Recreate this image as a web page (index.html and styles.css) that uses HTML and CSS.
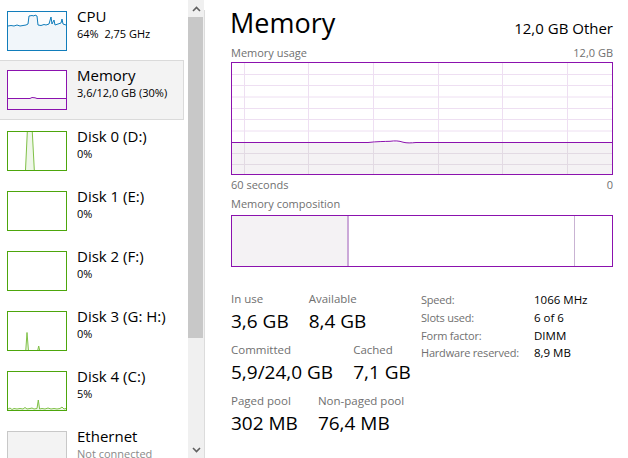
FILE: index.html
```html
<!DOCTYPE html>
<html>
<head>
<meta charset="utf-8">
<title>Task Manager - Memory</title>
<link rel="stylesheet" href="styles.css">
</head>
<body>
<div class="app">
  <nav class="sidebar">
    <div class="item">
      <div class="thumb thumb-cpu">
        <svg width="58" height="38" viewBox="0 0 58 38">
          <path class="cpu-fill" d="M0,14 L3,13.5 L6,14 L9,13 L12,14 L15,13.5 L18,13 L20,12 L21,4 L24,3.5 L26,4 L27,3 L29,4 L30,13 L33,13.5 L36,12.5 L38,13 L41,12 L43,5 L44,12 L46,8 L47,13 L50,12 L53,11 L54,7 L55,12 L58,13 L58,38 L0,38 Z"/>
          <path class="cpu-line" d="M0,14 L3,13.5 L6,14 L9,13 L12,14 L15,13.5 L18,13 L20,12 L21,4 L24,3.5 L26,4 L27,3 L29,4 L30,13 L33,13.5 L36,12.5 L38,13 L41,12 L43,5 L44,12 L46,8 L47,13 L50,12 L53,11 L54,7 L55,12 L58,13"/>
        </svg>
      </div>
      <div class="info"><div class="name">CPU</div><div class="sub">64%&nbsp; 2,75 GHz</div></div>
    </div>
    <div class="item selected">
      <div class="thumb thumb-mem">
        <svg width="58" height="38" viewBox="0 0 58 38">
          <path class="mem-fill" d="M0,27.5 L22,27.5 L24,26.5 L27,26.8 L29,27.5 L58,27.5 L58,38 L0,38 Z"/>
          <path class="mem-line" d="M0,27.5 L22,27.5 L24,26.5 L27,26.8 L29,27.5 L58,27.5"/>
        </svg>
      </div>
      <div class="info"><div class="name">Memory</div><div class="sub">3,6/12,0 GB (30%)</div></div>
    </div>
    <div class="item">
      <div class="thumb thumb-disk">
        <svg width="58" height="38" viewBox="0 0 58 38">
          <path class="disk-fill" d="M17.5,38 L19.3,0 L24.3,0 L26.3,38 Z"/>
          <path class="disk-line" d="M17.5,38 L19.3,0 M24.3,0 L26.3,38"/>
        </svg>
      </div>
      <div class="info"><div class="name">Disk 0 (D:)</div><div class="sub">0%</div></div>
    </div>
    <div class="item">
      <div class="thumb thumb-disk"></div>
      <div class="info"><div class="name">Disk 1 (E:)</div><div class="sub">0%</div></div>
    </div>
    <div class="item">
      <div class="thumb thumb-disk"></div>
      <div class="info"><div class="name">Disk 2 (F:)</div><div class="sub">0%</div></div>
    </div>
    <div class="item">
      <div class="thumb thumb-disk">
        <svg width="58" height="38" viewBox="0 0 58 38">
          <path class="disk-fill" d="M17.8,38 L19,20.5 L20.4,38 Z M29.8,38 L30.7,34 L31.6,38 Z"/>
          <path class="disk-line" d="M17.8,38 L19,20.5 L20.4,38 M29.8,38 L30.7,34 L31.6,38"/>
        </svg>
      </div>
      <div class="info"><div class="name">Disk 3 (G: H:)</div><div class="sub">0%</div></div>
    </div>
    <div class="item">
      <div class="thumb thumb-disk">
        <svg width="58" height="38" viewBox="0 0 58 38">
          <path class="disk-fill" d="M0,37 L2,36 L4,37.5 L6,36.5 L9,37 L12,36.5 L15,37 L17,35.5 L19,37 L22,36.5 L24,36 L26,37 L29,36.5 L30.3,28 L31.6,37 L34,36.5 L37,37 L40,36 L43,37 L46,36.5 L49,37 L52,36.5 L54,35 L56,37 L58,36.5 L58,38 L0,38 Z"/>
          <path class="disk-line" d="M0,37 L2,36 L4,37.5 L6,36.5 L9,37 L12,36.5 L15,37 L17,35.5 L19,37 L22,36.5 L24,36 L26,37 L29,36.5 L30.3,28 L31.6,37 L34,36.5 L37,37 L40,36 L43,37 L46,36.5 L49,37 L52,36.5 L54,35 L56,37 L58,36.5"/>
        </svg>
      </div>
      <div class="info"><div class="name">Disk 4 (C:)</div><div class="sub">5%</div></div>
    </div>
    <div class="item">
      <div class="thumb thumb-net"></div>
      <div class="info"><div class="name">Ethernet</div><div class="sub sub-muted">Not connected</div></div>
    </div>
  </nav>

  <div class="scrollbar">
    <div class="sb-arrow">
      <svg width="9" height="6" viewBox="0 0 9 6"><path d="M1,5 L4.5,1.5 L8,5" /></svg>
    </div>
    <div class="sb-thumb"></div>
    <div class="sb-track"></div>
    <div class="sb-arrow">
      <svg width="9" height="6" viewBox="0 0 9 6"><path d="M1,1 L4.5,4.5 L8,1" /></svg>
    </div>
  </div>
  <div class="divider"></div>

  <main class="main">
    <header class="header">
      <h1 class="title">Memory</h1>
      <div class="header-right">12,0 GB Other</div>
    </header>

    <div class="axis-row axis-top">
      <span>Memory usage</span><span>12,0 GB</span>
    </div>
    <div class="graph">
      <svg width="380" height="111" viewBox="0 0 380 111">
        <rect class="g-fill" x="0" y="79.5" width="380" height="31.5"/>
        <g class="g-grid">
          <line x1="0" y1="11.5" x2="380" y2="11.5"/>
          <line x1="0" y1="22.5" x2="380" y2="22.5"/>
          <line x1="0" y1="34" x2="380" y2="34"/>
          <line x1="0" y1="45.5" x2="380" y2="45.5"/>
          <line x1="0" y1="56.5" x2="380" y2="56.5"/>
          <line x1="0" y1="68" x2="380" y2="68"/>
          <line x1="12.5" y1="0" x2="12.5" y2="79"/>
          <line x1="76.5" y1="0" x2="76.5" y2="79"/>
          <line x1="141.5" y1="0" x2="141.5" y2="79"/>
          <line x1="206.5" y1="0" x2="206.5" y2="79"/>
          <line x1="270.5" y1="0" x2="270.5" y2="79"/>
          <line x1="335.5" y1="0" x2="335.5" y2="79"/>
        </g>
        <g class="g-grid-dark">
          <line x1="0" y1="90.5" x2="380" y2="90.5"/>
          <line x1="0" y1="101.5" x2="380" y2="101.5"/>
          <line x1="12.5" y1="80" x2="12.5" y2="111"/>
          <line x1="76.5" y1="80" x2="76.5" y2="111"/>
          <line x1="141.5" y1="80" x2="141.5" y2="111"/>
          <line x1="206.5" y1="80" x2="206.5" y2="111"/>
          <line x1="270.5" y1="80" x2="270.5" y2="111"/>
          <line x1="335.5" y1="80" x2="335.5" y2="111"/>
        </g>
        <path class="g-line" d="M0,79.5 L136,79.5 C145,78.5 152,78.5 158,78.3 C163,77.6 167,77.8 171,79.2 C175,80.2 179,80 184,79.5 L380,79.5"/>
      </svg>
    </div>
    <div class="axis-row axis-bottom">
      <span>60 seconds</span><span>0</span>
    </div>

    <div class="axis-row axis-comp">
      <span>Memory composition</span>
    </div>
    <div class="composition">
      <div class="comp-inuse"></div>
      <div class="comp-mod"></div>
      <div class="comp-standby"></div>
      <div class="comp-free"></div>
    </div>

    <section class="stats">
      <div class="stats-left">
        <div class="stat-row">
          <div class="stat"><div class="stat-label">In use</div><div class="stat-value">3,6 GB</div></div>
          <div class="stat"><div class="stat-label">Available</div><div class="stat-value">8,4 GB</div></div>
        </div>
        <div class="stat-row">
          <div class="stat"><div class="stat-label">Committed</div><div class="stat-value">5,9/24,0 GB</div></div>
          <div class="stat"><div class="stat-label">Cached</div><div class="stat-value">7,1 GB</div></div>
        </div>
        <div class="stat-row">
          <div class="stat"><div class="stat-label">Paged pool</div><div class="stat-value">302 MB</div></div>
          <div class="stat"><div class="stat-label">Non-paged pool</div><div class="stat-value">76,4 MB</div></div>
        </div>
      </div>
      <div class="stats-right">
        <span class="k">Speed:</span><span class="v">1066 MHz</span>
        <span class="k">Slots used:</span><span class="v">6 of 6</span>
        <span class="k">Form factor:</span><span class="v">DIMM</span>
        <span class="k">Hardware reserved:</span><span class="v">8,9 MB</span>
      </div>
    </section>
  </main>
</div>
</body>
</html>
```

FILE: styles.css
```css
* { box-sizing: border-box; }

html, body {
  margin: 0;
  padding: 0;
  background: #ffffff;
}

body {
  width: 628px;
  height: 458px;
  overflow: hidden;
  font-family: "Open Sans", "Noto Sans", sans-serif;
  color: #000000;
}

.app {
  display: flex;
  height: 458px;
}

/* ---------- sidebar ---------- */
.sidebar {
  width: 188px;
  flex: none;
  display: flex;
  flex-direction: column;
  overflow: hidden;
}

.item {
  width: 184px;
  height: 60px;
  flex: none;
  display: flex;
  align-items: flex-start;
  gap: 10px;
  padding: 10px 0 0 7px;
  border: 1px solid transparent;
  border-left: none;
}

.item.selected {
  background: #f3f3f3;
  border-color: #dadada;
  padding-top: 9px;
}

.thumb {
  width: 60px;
  height: 40px;
  flex: none;
  border: 1px solid;
  background: #ffffff;
}

.thumb svg { display: block; }

.thumb-cpu { border-color: #117dbb; background: #fbfdfe; }
.cpu-fill { fill: #f1f6fa; }
.cpu-line { fill: none; stroke: #117dbb; stroke-width: 1; }

.thumb-mem { border-color: #8b12ae; }
.mem-fill { fill: #f4f2f4; }
.mem-line { fill: none; stroke: #8b12ae; stroke-width: 1; }

.thumb-disk { border-color: #4da60c; }
.disk-fill { fill: #eff7e9; }
.disk-line { fill: none; stroke: #7fc046; stroke-width: 1; }

.thumb-net { border-color: #c8c8c8; background: #f3f3f3; }

.info {
  display: flex;
  flex-direction: column;
  white-space: nowrap;
}

.name {
  font-size: 15px;
  line-height: 17px;
  margin-top: -3px;
}

.sub {
  font-size: 11px;
  line-height: 15px;
  margin-top: 1px;
}

.sub-muted { color: #8a8a8a; }

/* ---------- scrollbar ---------- */
.scrollbar {
  width: 16px;
  flex: none;
  background: #f0f0f0;
  display: flex;
  flex-direction: column;
}

.sb-arrow {
  height: 17px;
  flex: none;
  display: flex;
  align-items: center;
  justify-content: center;
}

.sb-arrow svg path {
  fill: none;
  stroke: #606060;
  stroke-width: 1.6;
}

.sb-thumb {
  height: 321px;
  width: 15px;
  background: #c8c8c8;
  flex: none;
}

.sb-track { flex: 1; }

.divider {
  width: 1px;
  flex: none;
  margin-top: 10px;
  background: #dcdcdc;
}

/* ---------- main ---------- */
.main {
  flex: 1;
  padding: 0 15px 0 26px;
  display: flex;
  flex-direction: column;
}

.header {
  height: 44px;
  display: flex;
  justify-content: space-between;
  align-items: baseline;
}

.title {
  margin: 0;
  font-size: 27px;
  font-weight: normal;
  line-height: 46px;
  height: 44px;
  margin-left: -1px;
}

.header-right {
  font-size: 15px;
  line-height: 44px;
  position: relative;
  top: 1px;
}

.axis-row {
  display: flex;
  justify-content: space-between;
  font-size: 11px;
  color: #707070;
  white-space: nowrap;
}

.axis-top { height: 18px; line-height: 18px; }
.axis-bottom { height: 22px; line-height: 20px; }
.axis-comp { height: 18px; line-height: 14px; }

.graph {
  width: 382px;
  height: 113px;
  border: 1px solid #8b12ae;
  background: #ffffff;
}

.graph svg { display: block; }

.g-fill { fill: #f4f2f4; }
.g-grid line { stroke: #eedff2; stroke-width: 1; }
.g-grid-dark line { stroke: #e2dae3; stroke-width: 1; }
.g-line { fill: none; stroke: #8b12ae; stroke-width: 1; }

.composition {
  width: 382px;
  height: 52px;
  border: 1px solid #8b12ae;
  display: flex;
  flex: none;
}

.comp-inuse { width: 115px; background: #f4f2f4; }
.comp-mod { width: 2px; background: #cba9d8; }
.comp-standby { width: 225px; background: #ffffff; }
.comp-free { flex: 1; border-left: 1px solid #c9b3d3; }

/* ---------- stats ---------- */
.stats {
  display: flex;
  margin-top: 24px;
}

.stats-left {
  width: 190px;
  display: flex;
  flex-direction: column;
}

.stat-row {
  display: flex;
  gap: 20px;
  height: 51px;
  white-space: nowrap;
}

.stat {
  display: flex;
  flex-direction: column;
}

.stat-label {
  font-size: 11.5px;
  line-height: 16px;
  color: #707070;
}

.stat-value {
  font-size: 19px;
  line-height: 28px;
}

.stats-right {
  display: grid;
  grid-template-columns: 113px auto;
  grid-auto-rows: 17.7px;
  align-items: center;
  font-size: 11.5px;
  white-space: nowrap;
}

.stats-right .k {
  color: #707070;
  font-size: 11px;
  letter-spacing: -0.2px;
}
.stats-right .v { color: #000000; }
```
